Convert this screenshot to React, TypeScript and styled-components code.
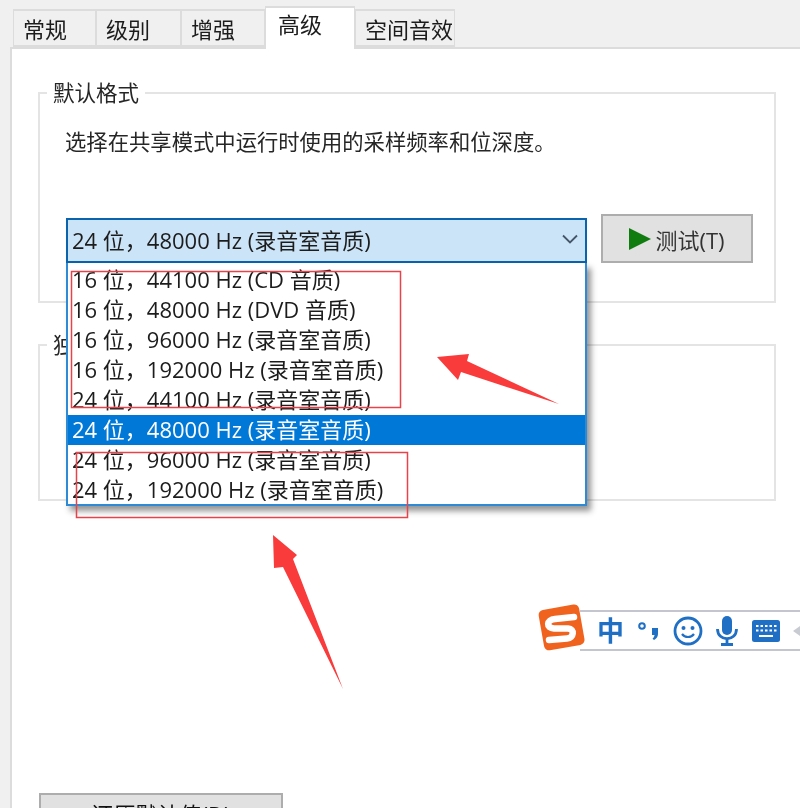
import styled, { createGlobalStyle } from "styled-components";

const GlobalStyle = createGlobalStyle`
  html, body {
    margin: 0;
    padding: 0;
    background: #f0f0f0;
  }
  * {
    box-sizing: border-box;
  }
`;

const FONT = `"Open Sans", "Noto Sans", "Noto Sans CJK SC", sans-serif`;

const Page = styled.div`
  position: relative;
  width: 800px;
  height: 808px;
  overflow: hidden;
  background: #f0f0f0;
  font-family: ${FONT};
  font-size: 22px;
  color: #1c1c1c;
  filter: blur(0.4px);
`;

const TabStrip = styled.div`
  display: flex;
  align-items: flex-end;
  height: 47px;
  padding-left: 13px;
`;

const Tab = styled.div<{ $width: number; $active?: boolean }>`
  position: relative;
  z-index: ${(p) => (p.$active ? 1 : 0)};
  width: ${(p) => p.$width}px;
  height: ${(p) => (p.$active ? 43 : 38)}px;
  margin-bottom: ${(p) => (p.$active ? -2 : 0)}px;
  padding-left: ${(p) => (p.$active ? 12 : 9)}px;
  line-height: ${(p) => (p.$active ? 33 : 36)}px;
  background: ${(p) => (p.$active ? "#fff" : "#f0f0f0")};
  border: 2px solid #dcdcdc;
  border-left-width: 1px;
  border-right-width: 1px;
  border-bottom: ${(p) => (p.$active ? "none" : "2px solid #dcdcdc")};
`;

const Panel = styled.div`
  margin-left: 10px;
  height: 761px;
  padding: 30px 24px 0 26px;
  background: #fff;
  border-top: 2px solid #dcdcdc;
  border-left: 2px solid #dcdcdc;
`;

const Group = styled.fieldset<{ $height: number; $gap?: number }>`
  height: ${(p) => p.$height}px;
  margin: ${(p) => p.$gap ?? 0}px 0 0;
  padding: 0 22px 0 25px;
  border: 2px solid #e4e4e4;
  min-width: 0;
`;

const Legend = styled.legend`
  margin-left: -18px;
  padding: 0 6px;
  font-size: 21.5px;
  line-height: 28px;
  color: #262626;
`;

const Hint = styled.p`
  margin: 21px 0 0;
  font-size: 21.33px;
  line-height: 28px;
  white-space: nowrap;
  color: #262626;
`;

const FormatRow = styled.div`
  display: flex;
  align-items: flex-end;
  gap: 14px;
  margin-top: 58px;
`;

const ComboWrap = styled.div`
  position: relative;
  flex: none;
  width: 521px;
  margin-left: 1px;
`;

const Combo = styled.div`
  display: flex;
  align-items: center;
  justify-content: space-between;
  height: 45px;
  padding: 0 7px 3px 4px;
  background: #cce4f7;
  border: 2px solid #0a63ad;
`;

const Menu = styled.div`
  position: absolute;
  top: 100%;
  left: 0;
  z-index: 2;
  width: 521px;
  height: 243px;
  padding-top: 2px;
  background: #fff;
  border: 2px solid #2f8ad6;
  border-top: none;
  box-shadow: 4px 5px 6px rgba(0, 0, 0, 0.42);
`;

const MenuItem = styled.div<{ $selected?: boolean }>`
  height: 30px;
  padding-left: 4px;
  line-height: 28px;
  white-space: nowrap;
  background: ${(p) => (p.$selected ? "#0078d7" : "transparent")};
  color: ${(p) => (p.$selected ? "#fff" : "#1c1c1c")};
`;

const Button = styled.div`
  display: flex;
  align-items: center;
  justify-content: center;
  gap: 4px;
  flex: none;
  width: 152px;
  height: 49px;
  background: #e1e1e1;
  border: 2px solid #adadad;
  color: #333;
`;

const ResetButton = styled(Button)`
  width: 244px;
  height: 44px;
  margin: 292px 0 0 1px;
  padding-bottom: 5px;
  color: #111;
`;

const Annotations = styled.svg`
  position: absolute;
  top: 0;
  left: 0;
  z-index: 3;
  width: 800px;
  height: 808px;
  pointer-events: none;
`;

const ImeBar = styled.div`
  position: absolute;
  top: 610px;
  left: 580px;
  z-index: 4;
  display: flex;
  align-items: center;
  width: 220px;
  height: 41px;
  padding-left: 17px;
  background: #fff;
  border-top: 2px solid #c3c6cf;
  border-bottom: 2px solid #c3c6cf;
  color: #1f6fc4;
`;

const ImeLang = styled.span`
  flex: none;
  width: 41px;
  font-size: 27px;
  font-weight: 700;
  line-height: 36px;
`;

const ImeIcon = styled.svg<{ $after: number }>`
  flex: none;
  margin-right: ${(p) => p.$after}px;
`;

const ImeLogo = styled.svg`
  position: absolute;
  top: 602px;
  left: 536px;
  z-index: 5;
`;

const FORMATS = [
  "16 位，44100 Hz (CD 音质)",
  "16 位，48000 Hz (DVD 音质)",
  "16 位，96000 Hz (录音室音质)",
  "16 位，192000 Hz (录音室音质)",
  "24 位，44100 Hz (录音室音质)",
  "24 位，48000 Hz (录音室音质)",
  "24 位，96000 Hz (录音室音质)",
  "24 位，192000 Hz (录音室音质)",
];

const TABS = [
  { label: "常规", width: 83 },
  { label: "级别", width: 85 },
  { label: "增强", width: 84 },
  { label: "高级", width: 90, active: true },
  { label: "空间音效", width: 100 },
];

const App = () => {
  return (
    <Page>
      <GlobalStyle />
      <TabStrip>
        {TABS.map((t) => (
          <Tab key={t.label} $width={t.width} $active={t.active}>
            {t.label}
          </Tab>
        ))}
      </TabStrip>
      <Panel>
        <Group $height={224}>
          <Legend>默认格式</Legend>
          <Hint>选择在共享模式中运行时使用的采样频率和位深度。</Hint>
          <FormatRow>
            <ComboWrap>
              <Combo>
                <span>24 位，48000 Hz (录音室音质)</span>
                <svg width="16" height="10" viewBox="0 0 16 10">
                  <path d="M1 1.500 8 8.500 15 1.500" fill="none" stroke="#44566a" strokeWidth="1.800" />
                </svg>
              </Combo>
              <Menu>
                {FORMATS.map((f, i) => (
                  <MenuItem key={f} $selected={i === 5}>
                    {f}
                  </MenuItem>
                ))}
              </Menu>
            </ComboWrap>
            <Button>
              <svg width="22" height="22" viewBox="0 0 22 22">
                <path d="M0 0 22 11 0 22Z" fill="#107c10" />
              </svg>
              测试(T)
            </Button>
          </FormatRow>
        </Group>
        <Group $height={170} $gap={28}>
          <Legend>独占模式</Legend>
        </Group>
        <ResetButton>还原默认值(D)</ResetButton>
      </Panel>

      <Annotations viewBox="0 0 800 808">
        <rect x="71.500" y="271.500" width="329" height="136" fill="none" stroke="#e8434a" strokeWidth="1.500" />
        <rect x="76.500" y="452.500" width="331" height="65" fill="none" stroke="#e8434a" strokeWidth="1.500" />
        <path d="M437 357 469 354 467 361 559 404 461 372 458 380Z" fill="#f93b3b" />
        <path d="M273 535 297 555 293 559 343 689 283 567 274 568Z" fill="#f93b3b" />
      </Annotations>

      <ImeLogo width="52" height="52" viewBox="0 0 52 52">
        <rect x="5" y="5" width="41" height="41" rx="5" fill="#f0631e" transform="rotate(-10 25 25)" />
        <path
          d="M38 15 19 17C10 18 10 26 18 26.500L32 26.500C39 27 38 36 31 36.500L13 38"
          fill="none"
          stroke="#fff"
          strokeWidth="6.500"
          strokeLinecap="round"
        />
      </ImeLogo>
      <ImeBar>
        <ImeLang>中</ImeLang>
        <ImeIcon $after={11} width="24" height="26" viewBox="0 0 24 26">
          <circle cx="4" cy="8" r="2.800" fill="none" stroke="#1f6fc4" strokeWidth="2" />
          <path d="M14 10h6v6c0 3-2 5-4 6l-1.500-1.500c1-.6 2-2 2-3.500h-2.500Z" fill="#1f6fc4" />
        </ImeIcon>
        <ImeIcon $after={13} width="30" height="30" viewBox="0 0 30 30">
          <circle cx="15" cy="15" r="13" fill="none" stroke="#1f6fc4" strokeWidth="2.800" />
          <circle cx="10.500" cy="12" r="2" fill="#1f6fc4" />
          <circle cx="19.500" cy="12" r="2" fill="#1f6fc4" />
          <path d="M9 18c3 4 9 4 12 0" fill="none" stroke="#1f6fc4" strokeWidth="2.200" />
        </ImeIcon>
        <ImeIcon $after={14} width="22" height="30" viewBox="0 0 22 30">
          <rect x="6" y="0" width="10" height="19" rx="5" fill="#1f6fc4" />
          <path d="M1.500 13c0 13 19 13 19 0M11 22v6M5 28.500h12" fill="none" stroke="#1f6fc4" strokeWidth="2.800" />
        </ImeIcon>
        <ImeIcon $after={13} width="28" height="22" viewBox="0 0 28 22">
          <rect x="0" y="0" width="28" height="22" rx="2.500" fill="#1f6fc4" />
          <path
            d="M4 6h2.500M8.500 6H11M13 6h2.500M17.500 6H20M22 6h2.500M4 10.500h2.500M8.500 10.500H11M13 10.500h2.500M17.500 10.500H20M22 10.500h2.500M7 16h14"
            stroke="#fff"
            strokeWidth="2"
          />
        </ImeIcon>
        <ImeIcon $after={0} width="10" height="20" viewBox="0 0 10 20">
          <path d="M10 3 0 10 10 17Z" fill="#c8ccd2" />
        </ImeIcon>
      </ImeBar>
    </Page>
  );
};

export default App;
